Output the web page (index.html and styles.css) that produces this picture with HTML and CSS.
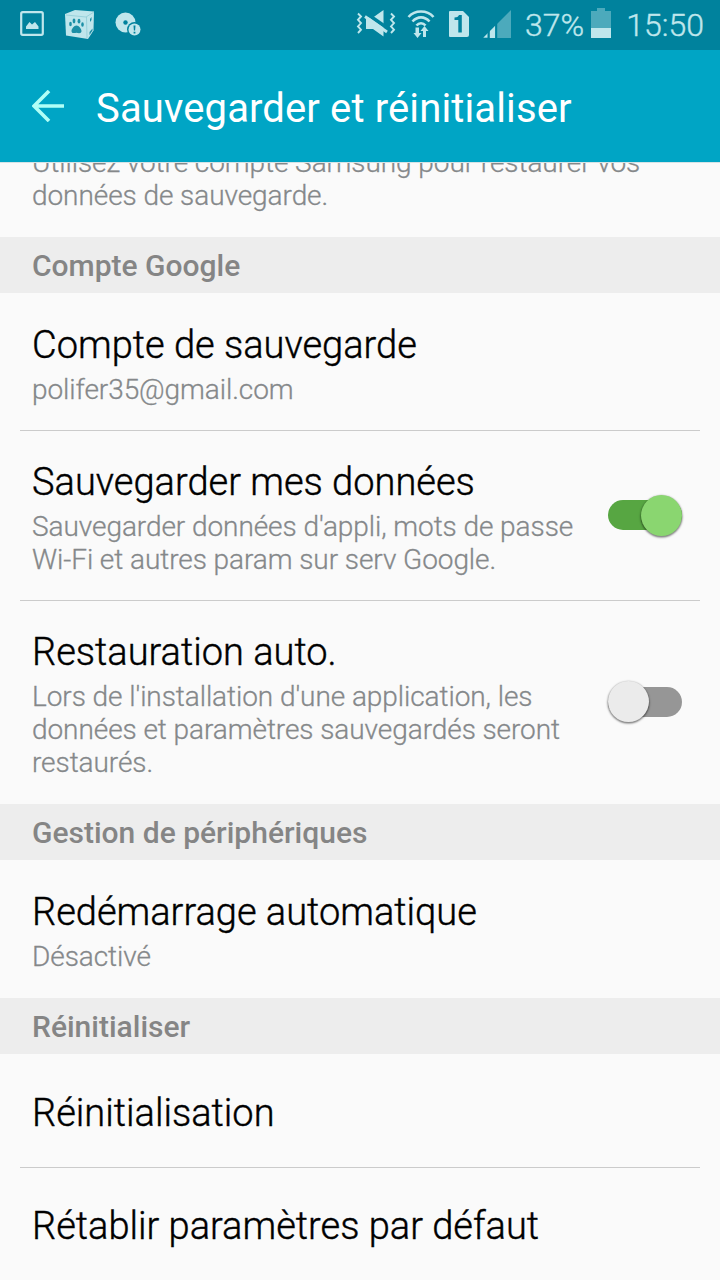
FILE: index.html
```html
<!DOCTYPE html>
<html lang="fr">
<head>
<meta charset="utf-8">
<title>Sauvegarder et réinitialiser</title>
<link rel="stylesheet" href="styles.css">
</head>
<body>
<div class="screen">
  <div class="status">
    <div class="notifications">
      <svg width="24" height="25" viewBox="0 0 24 25"><rect x="1.2" y="1.2" width="21.6" height="22.6" rx="1.5" fill="none" stroke="currentColor" stroke-width="2.200"/><path d="M6 18v-2.500l3.500-4.500 2.500 2.500 3-2.500 3.500 4.500V18z" fill="currentColor"/></svg>
      <svg class="cube" width="32" height="30" viewBox="0 0 32 30"><path d="M1 5 11 1l19 1.500-.5 19L24 30 2 26.500z" fill="currentColor"/><path d="m2 6 20 2 8-5M22.500 8 23 29" fill="none" stroke="#8fcbd5" stroke-width=".8"/><g fill="#1b8fa6"><ellipse cx="6.500" cy="15" rx="1.300" ry="2.200"/><ellipse cx="10" cy="12" rx="1.400" ry="2.400"/><ellipse cx="15" cy="12.200" rx="1.400" ry="2.400"/><ellipse cx="18.500" cy="15.500" rx="1.300" ry="2.200"/><path d="M7.500 22c0-2 2.500-5.500 5-5.500s5 3.500 5 5.500c0 3-3.500 2.200-5 1.700-1.500.3-5 1.300-5-1.700z"/><path d="m26 10 1.500-2v3L26 13zM25.500 23l3-3.500v2L25.500 26z"/></g></svg>
      <svg class="disc" width="28" height="26" viewBox="0 0 28 26"><circle cx="10.500" cy="10.500" r="10" fill="currentColor"/><circle cx="10.500" cy="10.500" r="2.200" fill="#00829d"/><circle cx="19.500" cy="17.500" r="7.500" fill="#00829d"/><circle cx="19.500" cy="17.500" r="6" fill="currentColor"/><path d="M18.500 13.500h2l-.4 5h-1.200zM18.600 19.700h1.800v1.800h-1.800z" fill="#00829d"/></svg>
    </div>
    <div class="indicators">
      <svg class="mute" width="40" height="30" viewBox="0 0 40 30"><g fill="none" stroke="currentColor" stroke-width="1.900"><path d="m2 4.500 3 3-3 3.300 3 3.300-3 3.300 3 3.300-3 3.300M35 4.500l3 3-3 3.300 3 3.300-3 3.300 3 3.300-3 3.300"/></g><path d="M10 8.500h7L27.500 1v26.500L17 20h-7z" fill="currentColor"/><path d="M9 3.500 32 19.500" stroke="#00829d" stroke-width="3.500"/><path d="M9 7.500 31 23" stroke="currentColor" stroke-width="2.800"/></svg>
      <svg class="wifi" width="28" height="30" viewBox="0 0 28 30"><g fill="none" stroke="currentColor" stroke-width="2.600"><path d="M1.500 8C8 .6 20 .6 26.500 8M5.500 12.500c5-5.500 12-5.500 17 0M9.500 16.500c2.500-3 6.500-3 9 0"/></g><path d="M8.500 18.500h3.500v5.500h2.500l-4 5-4-5h2zM16 28h3v-6h2.500l-4-5-4 5H16z" fill="currentColor"/></svg>
      <svg class="sim" width="22" height="28" viewBox="0 0 22 28"><path d="M2 1h13l6 6v18a2 2 0 0 1-2 2H2a1 1 0 0 1-1-1V2a1 1 0 0 1 1-1z" fill="currentColor"/><path d="M10.300 22.500V10H6.500V7.500q3.500 0 4.500-2.500h2.800v17.500z" fill="#00829d"/></svg>
      <svg class="signal" width="28" height="28" viewBox="0 0 28 28"><path d="M0 28 28 0v28z" fill="currentColor" opacity=".4"/><path d="M.5 27.500 5 23v4.500zM7 21l5-5v12H7z" fill="currentColor"/><path d="M5.500 20v8M13.200 13v15" stroke="#00829d" stroke-width="2"/></svg>
      <span class="percent">37%</span>
      <svg class="battery" width="20" height="30" viewBox="0 0 20 30"><path d="M0 3h6V0h8v3h6v17H0z" fill="currentColor" opacity=".4"/><path d="M0 20h20v10H0z" fill="currentColor"/></svg>
      <span class="clock">15:50</span>
    </div>
  </div>
  <header class="appbar">
    <svg width="32" height="32" viewBox="0 0 32 32"><path d="M32 16H2M17 1 2 16l15 15" fill="none" stroke="#b0fff7" stroke-width="3.600"/></svg>
    <h1>Sauvegarder et réinitialiser</h1>
  </header>
  <main>
    <div class="scrolled"><p class="summary">Utilisez votre compte Samsung pour restaurer vos<br>données de sauvegarde.</p></div>
    <h2>Compte Google</h2>
    <div class="row lead divided"><div><div class="title">Compte de sauvegarde</div><p class="summary">polifer35@gmail.com</p></div></div>
    <div class="row divided"><div><div class="title">Sauvegarder mes données</div><p class="summary">Sauvegarder données d'appli, mots de passe<br>Wi-Fi et autres param sur serv Google.</p></div><div class="switch on"><i class="knob"></i></div></div>
    <div class="row"><div><div class="title">Restauration auto.</div><p class="summary">Lors de l'installation d'une application, les<br>données et paramètres sauvegardés seront<br>restaurés.</p></div><div class="switch"><i class="knob"></i></div></div>
    <h2>Gestion de périphériques</h2>
    <div class="row lead"><div><div class="title">Redémarrage automatique</div><p class="summary">Désactivé</p></div></div>
    <h2>Réinitialiser</h2>
    <div class="row single divided"><div class="title">Réinitialisation</div></div>
    <div class="row single last"><div class="title">Rétablir paramètres par défaut</div></div>
  </main>
</div>
</body>
</html>
```

FILE: styles.css
```css
* { box-sizing: border-box; }
body { margin: 0; font-family: Roboto, sans-serif; background: #fafafa; color: #000; }
h1, h2, p { margin: 0; }
svg { display: block; flex: none; }
.screen { height: 1280px; overflow: hidden; display: flex; flex-direction: column; }
.status { flex: none; height: 50px; background: #00829d; color: #bfe6ec; display: flex; justify-content: space-between; padding: 0 16px 0 20px; }
.notifications, .indicators { display: flex; align-items: flex-start; }
.notifications svg { margin-top: 11px; }
.notifications .cube { margin: 9px 0 0 20px; }
.notifications .disc { margin: 12px 0 0 19px; }
.mute { margin: 9px 11px 0 0; }
.wifi { margin: 9px 13px 0 0; }
.sim { margin: 10px 13px 0 0; }
.signal { margin: 10px 14px 0 0; }
.battery { margin: 8px 0 0 7px; }
.percent, .clock { font-size: 32px; line-height: 50px; font-weight: 300; -webkit-text-stroke: .4px currentColor; white-space: nowrap; }
.percent { width: 59px; }
.clock { width: 93px; text-align: right; }
.appbar { flex: none; height: 112px; background: #00a5c5; color: #fff; display: flex; align-items: center; padding: 0 32px; gap: 32px; }
h1 { font-size: 40px; line-height: 48px; font-weight: 400; letter-spacing: .13px; padding-top: 5px; white-space: nowrap; }
main { flex: 1; min-height: 0; overflow: hidden; border-top: 1px solid #d5e3e6; }
.scrolled { height: 74px; display: flex; flex-direction: column; justify-content: flex-end; padding: 0 32px 25px; }
.summary { font-size: 28px; line-height: 33px; font-weight: 300; letter-spacing: -.07px; -webkit-text-stroke: .3px currentColor; color: #85888a; white-space: nowrap; }
h2 { height: 56px; line-height: 58px; padding-left: 32px; background: #ededed; color: #858585; font-size: 30px; font-weight: 500; }
.row { display: flex; justify-content: space-between; align-items: center; padding: 29px 38px 25px 32px; position: relative; }
.row.lead { padding-top: 30px; }
.divided::after { content: ""; position: absolute; left: 20px; right: 20px; bottom: 0; height: 1px; background: #cbcbcb; }
.title { font-size: 38px; line-height: 45px; font-weight: 300; -webkit-text-stroke: .4px currentColor; white-space: nowrap; padding-bottom: 5px; box-sizing: content-box; }
.row.single { height: 114px; padding-top: 9px; padding-bottom: 0; }
.row.single.last { padding-top: 7px; }
.switch { flex: none; width: 74px; height: 30px; margin-bottom: 6px; border-radius: 15px; background: #969696; display: flex; align-items: center; }
.knob { width: 41px; height: 41px; flex: none; border-radius: 50%; background: #ebebeb; box-shadow: 0 1px 2px .5px rgba(0, 0, 0, .5); }
.switch.on { background: #57a642; justify-content: flex-end; }
.switch.on .knob { background: #8ad670; }
```
